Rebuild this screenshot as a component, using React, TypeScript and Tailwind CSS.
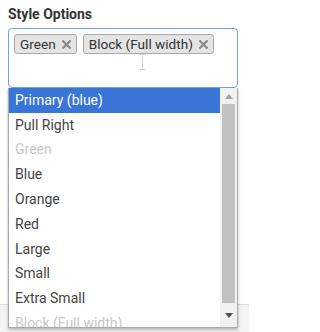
import React from "react";

const options = [
  { label: "Primary (blue)", active: true },
  { label: "Pull Right" },
  { label: "Green", disabled: true },
  { label: "Blue" },
  { label: "Orange" },
  { label: "Red" },
  { label: "Large" },
  { label: "Small" },
  { label: "Extra Small" },
  { label: "Block (Full width)", disabled: true },
];

const selected = ["Green", "Block (Full width)"];

const RemoveIcon = () => (
  <svg width="9" height="9" viewBox="0 0 9 9" className="shrink-0">
    <path d="M1.2 1.2 L7.8 7.8 M7.8 1.2 L1.2 7.8" stroke="#8a8a8a" strokeWidth="2.2" strokeLinecap="square" />
  </svg>
);

export default function App() {
  return (
    <div className="w-[249px] h-[332px] overflow-hidden bg-white font-['Roboto',sans-serif] text-[#333]">
      <div className="h-[304px] px-2 pt-[5px]">
        <label className="block text-[14px] font-bold leading-[18px] text-[#333]">Style Options</label>

        <div className="relative mt-[5px]">
          {/* select box */}
          <div className="h-[60px] w-[230px] rounded-[4px] border border-[#6fa3e8] px-[5px] pt-[5px]">
            <div className="flex flex-wrap gap-[6px]">
              {selected.map((s) => (
                <span
                  key={s}
                  className="flex h-[20px] items-center gap-[6px] rounded-[3px] border border-[#aaa] bg-[#e4e4e4] pl-[5px] pr-[5px] text-[13.6px] text-[#333]"
                >
                  {s}
                  <RemoveIcon />
                </span>
              ))}
            </div>
          </div>

          {/* mouse I-beam */}
          <svg className="absolute left-[131px] top-[26px]" width="7" height="16" viewBox="0 0 7 16">
            <path d="M0.5 0.5 H6.5 M3.5 0.5 V15.5 M0.5 15.5 H6.5" stroke="#d0d0d0" strokeWidth="1" fill="none" />
          </svg>

          {/* dropdown */}
          <div className="absolute left-0 top-[60px] z-10 flex h-[240px] w-[230px] border border-[#aaa] border-t-0 bg-white shadow-[0_2px_3px_rgba(0,0,0,0.25)]">
            <ul className="flex-1 overflow-hidden">
              {options.map((o) => (
                <li
                  key={o.label}
                  className={
                    "flex h-[24.8px] items-center whitespace-nowrap pl-[6px] text-[14px] " +
                    (o.active ? "bg-[#3875d7] text-white" : o.disabled ? "text-[#c8c8c8]" : "text-[#444]")
                  }
                >
                  {o.label}
                </li>
              ))}
            </ul>
            {/* scrollbar */}
            <div className="flex w-[17px] flex-col items-center bg-[#f1f1f1]">
              <div className="flex h-[16px] w-full items-center justify-center">
                <svg width="8" height="5" viewBox="0 0 8 5">
                  <path d="M0 5 L4 0 L8 5 Z" fill="#a3a3a3" />
                </svg>
              </div>
              <div className="h-[199px] w-[13px] bg-[#c1c1c1]" />
              <div className="flex flex-1 items-center justify-center">
                <svg width="8" height="5" viewBox="0 0 8 5">
                  <path d="M0 0 L8 0 L4 5 Z" fill="#505050" />
                </svg>
              </div>
            </div>
          </div>
        </div>
      </div>
      <div className="h-[28px] border-t border-[#dcdcdc] bg-[#f4f4f4]" />
    </div>
  );
}
